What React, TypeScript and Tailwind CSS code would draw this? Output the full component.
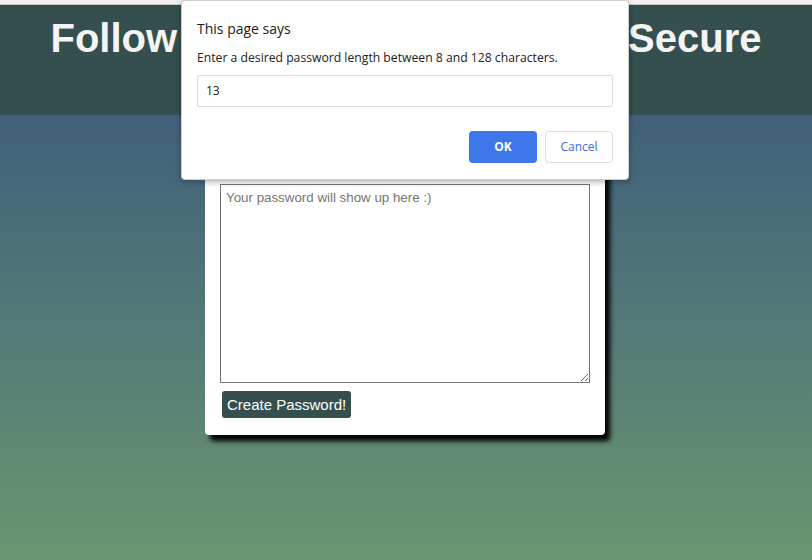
import React from "react";

export default function App() {
  return (
    <div className="relative w-[812px] h-[560px] overflow-hidden font-['Liberation_Sans',Arial,sans-serif]">
      {/* top strip */}
      <div className="h-[4px] bg-[#f1f1f1] border-b border-[#c9c9c9] box-content" />
      {/* header */}
      <header className="h-[110px] bg-[#344f4e] pt-[10px]">
        <h1 className="text-center text-[40px] leading-[46px] font-bold text-[#f4f4f4] whitespace-nowrap [word-spacing:1.3px]">
          Follow the prompts to remain Secure
        </h1>
      </header>
      {/* main */}
      <main className="h-[445px] bg-gradient-to-b from-[#41607a] to-[#6b956e] pt-[20px]">
        <div className="ml-[205px] w-[400px] bg-white rounded-[4px] shadow-[5px_6px_5px_#000] px-[15px] pt-[15px] pb-[17px] flex flex-col">
          <div className="h-[24px] mb-[10px] text-[20px] font-bold text-[#333] border-b border-[#ddd]">
            Generate a Password
          </div>
          <textarea
            readOnly
            placeholder="Your password will show up here :)"
            className="w-[370px] h-[199px] border border-[#767676] px-[5px] pt-[5px] pb-[3px] text-[13.33px] leading-[15px] text-black placeholder:text-[#757575] font-['Liberation_Sans',Arial,sans-serif] resize-y block"
          />
          <div className="mt-[8px] pl-[2px]">
            <button className="h-[27px] px-[5px] bg-[#344f4e] text-white text-[15px] rounded-[3px] leading-[27px]">
              Create Password!
            </button>
          </div>
        </div>
      </main>

      {/* prompt dialog overlay */}
      <div className="absolute left-[181px] top-0 w-[448px] h-[180px] bg-white border border-[#cfcfcf] rounded-[4px] shadow-[0_2px_6px_rgba(0,0,0,0.3)] px-[15px] font-['Open_Sans','Noto_Sans',sans-serif] text-[#202124]">
        <div className="pt-[18px] text-[14px] leading-[20px]">This page says</div>
        <div className="mt-[10px] text-[12.2px] leading-[18px]">
          Enter a desired password length between 8 and 128 characters.
        </div>
        <div className="mt-[8px] h-[32px] w-[416px] border border-[#dadce0] rounded-[2px] flex items-center px-[8px] text-[12px]">
          13
        </div>
        <div className="mt-[24px] flex justify-end gap-[8px]">
          <button className="w-[68px] h-[32px] rounded-[4px] bg-[#3d77ea] text-white text-[12px] font-bold">
            OK
          </button>
          <button className="w-[68px] h-[32px] rounded-[4px] bg-white border border-[#dadce0] text-[#3d6ae0] text-[12px]">
            Cancel
          </button>
        </div>
      </div>
    </div>
  );
}
